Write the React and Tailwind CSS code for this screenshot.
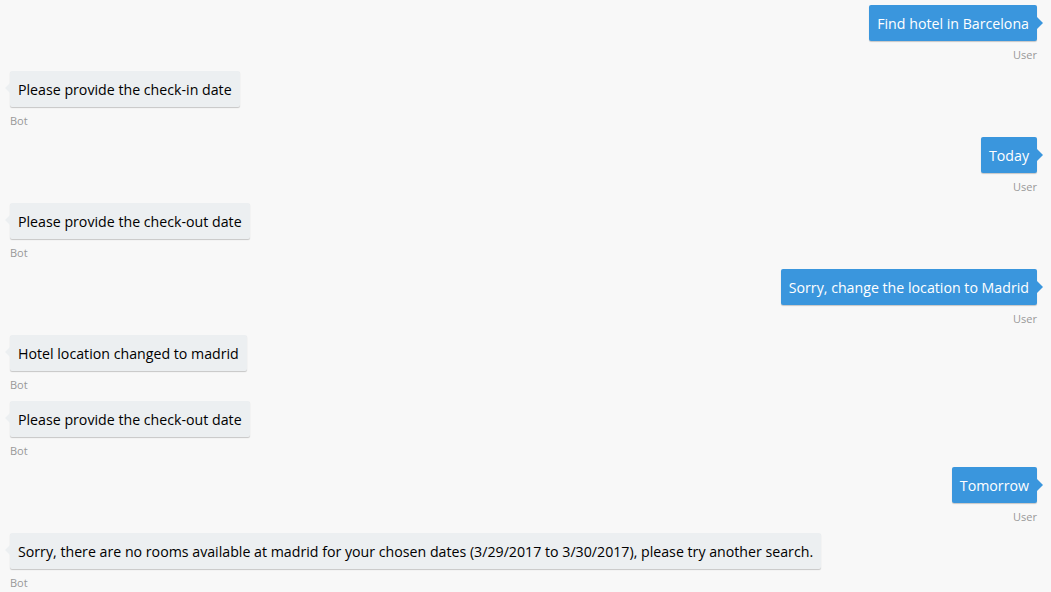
const messages = [
  { from: "user", text: "Find hotel in Barcelona" },
  { from: "bot", text: "Please provide the check-in date" },
  { from: "user", text: "Today" },
  { from: "bot", text: "Please provide the check-out date" },
  { from: "user", text: "Sorry, change the location to Madrid" },
  { from: "bot", text: "Hotel location changed to madrid" },
  { from: "bot", text: "Please provide the check-out date" },
  { from: "user", text: "Tomorrow" },
  {
    from: "bot",
    text: "Sorry, there are no rooms available at madrid for your chosen dates (3/29/2017 to 3/30/2017), please try another search.",
  },
];

function Message({ from, text }) {
  const isUser = from === "user";
  return (
    <div className={`flex flex-col mb-[9px] ${isUser ? "items-end" : "items-start"}`}>
      <div
        className={`relative h-[36px] px-2 pt-[9px] pb-[7px] text-[14.2px] leading-[20px] rounded-[2px] shadow-[0_1px_1px_rgba(0,0,0,0.2)] ${
          isUser ? "bg-[#3a96dd] text-white" : "bg-[#eceff1] text-black"
        }`}
      >
        {text}
        {isUser ? (
          <span className="absolute right-[-6px] top-[12px] w-0 h-0 border-y-[6px] border-y-transparent border-l-[6px] border-l-[#3a96dd]" />
        ) : (
          <span className="absolute left-[-5px] top-[12px] w-0 h-0 border-y-[5px] border-y-transparent border-r-[5px] border-r-[#eceff1]" />
        )}
      </div>
      <div className="mt-[7px] text-[11px] leading-[14px] text-[#999]">
        {isUser ? "User" : "Bot"}
      </div>
    </div>
  );
}

export default function App() {
  return (
    <div
      className="w-[1051px] h-[592px] overflow-hidden bg-[#f8f8f8] pt-[5px] pl-[10px] pr-[14px]"
      style={{ fontFamily: '"Open Sans", "Noto Sans", sans-serif' }}
    >
      {messages.map((m, i) => (
        <Message key={i} from={m.from} text={m.text} />
      ))}
    </div>
  );
}
